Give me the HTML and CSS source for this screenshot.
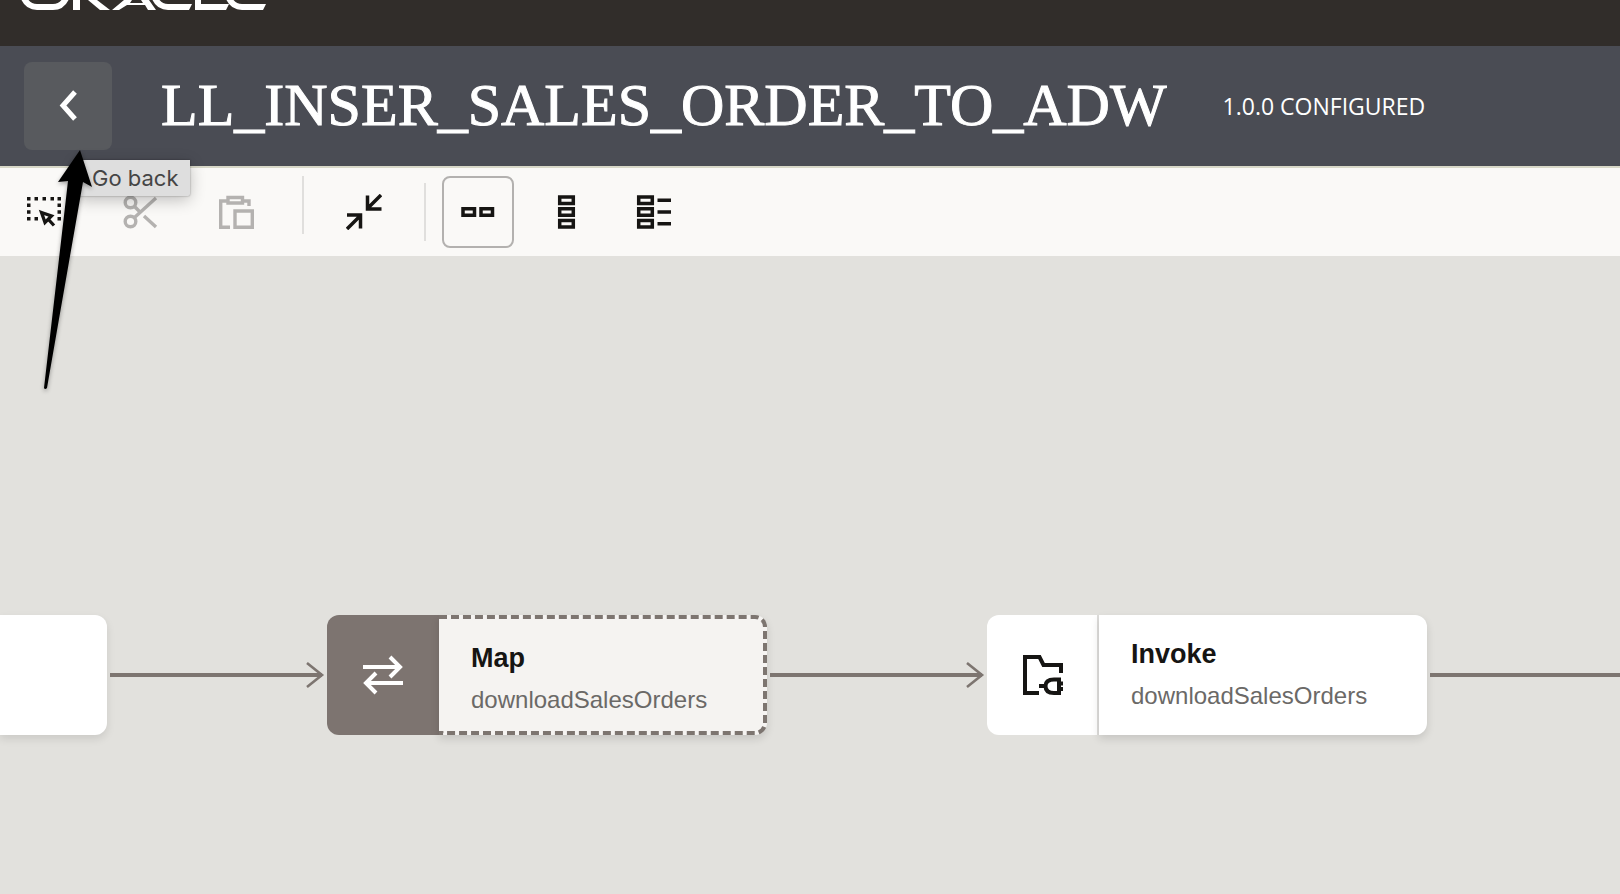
FILE: index.html
```html
<!DOCTYPE html>
<html lang="en">
<head>
<meta charset="utf-8">
<title>LL_INSER_SALES_ORDER_TO_ADW</title>
<meta name="viewport" content="width=device-width, initial-scale=1">
<link rel="stylesheet" href="styles.css">
</head>
<body>
<header class="brand">
  <svg class="brand-logo" width="300" height="12" viewBox="0 0 300 12" role="img" aria-label="Oracle">
    <g fill="none" stroke="#fff" stroke-width="6">
      <path d="M23-4Q27 7 37 7H53Q63 7 67-4"/>
      <path d="M154-4Q158 7 168 7H188"/>
      <path d="M198-4V7H225"/>
      <path d="M228-4Q232 7 242 7H262"/>
    </g>
    <g fill="#fff">
      <path d="M73 0h7v10h-7z"/>
      <path d="M88 0H97L110 10H100z"/>
      <path d="M124 0H132L130 3H143L141 0H149L156 10H148L145 5H127L119 10H112z"/>
      <path d="M188 4H192L189 10H188zM225 4H229L226 10H225zM262 4H266L263 10H262z"/>
    </g>
  </svg>
</header>
<div class="titlebar">
  <div class="back">
    <button class="back-button" type="button" aria-label="Go back" aria-describedby="back-tip">
      <svg width="20" height="32" viewBox="0 0 20 32" fill="none" stroke="#fff" stroke-width="5"><path d="M17 2L5 15.500L17 29"/></svg>
    </button>
    <span class="tooltip" id="back-tip" role="tooltip">Go back</span>
    <svg class="pointer" width="60" height="260" viewBox="0 0 60 260" aria-hidden="true"><path d="M38 10L50 47L41 42Q22 150 5 248Q3 250 2 248Q14 145 26 41L16 42z"/></svg>
  </div>
  <h1 class="title">LL_INSER_SALES_ORDER_TO_ADW</h1>
  <span class="version">1.0.0 CONFIGURED</span>
</div>
<div class="toolbar" role="toolbar" aria-label="Canvas tools">
  <button class="tool" type="button" aria-label="Select">
    <svg width="36" height="36" viewBox="0 0 36 36"><g fill="none" stroke="#161513" stroke-width="3.400"><path d="M1 4.700H4.500M8.500 4.700H12M16.500 4.700H20M24.500 4.700H28M31.500 4.700H35M1 11.300H4.500M1 18H4.500M1 24.700H4.500M8.500 24.700H12M31.500 11.300H35M31.500 18H35M31.500 24.700H35"/><path d="M15.500 18.500L25.500 22L19 28.500zM22 25L28 31.500" stroke-width="3.300"/></g></svg>
  </button>
  <button class="tool" type="button" aria-label="Cut" disabled>
    <svg width="36" height="36" viewBox="0 0 36 36" fill="none" stroke="#b4b2b0" stroke-width="3.400"><circle cx="8.500" cy="8.500" r="5.300"/><circle cx="8.500" cy="27.500" r="5.300"/><path d="M12.500 23.500L34 4M12.500 12.500L18 18M22 22L34 33"/></svg>
  </button>
  <button class="tool" type="button" aria-label="Paste" disabled>
    <svg width="36" height="36" viewBox="0 0 36 36" fill="none" stroke="#b4b2b0" stroke-width="3.400"><path d="M12 33.300H2.700V7H9M25 7H31V12M10 3.500H24.500V9H10zM17 17H34.300V33.300H17z"/></svg>
  </button>
  <span class="divider divider-high"></span>
  <button class="tool tool-collapse" type="button" aria-label="Collapse all">
    <svg width="36" height="36" viewBox="0 0 36 36" fill="none" stroke="#161513" stroke-width="3.500"><path d="M35 1L21.500 14.500M21.500 1.500V15H35.500M1 35L14.500 21.500M1 21H14.500V34.500"/></svg>
  </button>
  <span class="divider"></span>
  <button class="tool tool-active" type="button" aria-label="Horizontal layout" aria-pressed="true">
    <svg width="36" height="36" viewBox="0 0 36 36" fill="none" stroke="#161513" stroke-width="3.500"><path d="M3 14.700H14.500V21.300H3zM21 14.700H32.500V21.300H21z"/></svg>
  </button>
  <button class="tool" type="button" aria-label="Vertical layout">
    <svg width="36" height="36" viewBox="0 0 36 36" fill="none" stroke="#161513" stroke-width="3.500"><path d="M11.700 3H25.300V9.500H11.700zM11.700 14.800H25.300V21.300H11.700zM11.700 26.600H25.300V33H11.700z"/></svg>
  </button>
  <button class="tool" type="button" aria-label="Outline view">
    <svg width="36" height="36" viewBox="0 0 36 36" fill="none" stroke="#161513" stroke-width="3.500"><path d="M2.700 3H16.300V9.500H2.700zM2.700 14.800H16.300V21.300H2.700zM2.700 26.600H16.300V33H2.700zM21.500 6.200H35M21.500 18H35M21.500 29.800H35"/></svg>
  </button>
</div>
<main class="canvas">
  <div class="flow">
    <div class="node-tail"></div>
    <svg class="link" width="220" height="30" viewBox="0 0 220 30" fill="none" stroke="#7d7570"><path d="M3 15H215" stroke-width="4"/><path d="M200 3L215 15L200 27" stroke-width="2.600"/></svg>
    <article class="node node-map">
      <div class="node-icon"><svg width="42" height="42" viewBox="0 0 42 42" fill="none" stroke="#fff" stroke-width="4"><path d="M1 13H38M28 3L38 13L28 23M41 29H4M14 19L4 29L14 39"/></svg></div>
      <div class="node-body"><h2 class="node-name">Map</h2><p class="node-detail">downloadSalesOrders</p></div>
    </article>
    <svg class="link" width="220" height="30" viewBox="0 0 220 30" fill="none" stroke="#7d7570"><path d="M3 15H215" stroke-width="4"/><path d="M200 3L215 15L200 27" stroke-width="2.600"/></svg>
    <article class="node node-invoke">
      <div class="node-icon"><svg width="42" height="42" viewBox="0 0 42 42" fill="none" stroke="#161513" stroke-width="4"><path d="M18 39H4V3H18.500L22.500 11H40V19M18 32H24M38 25.500H33Q24.500 25.500 24.500 32Q24.500 39 33 39H38zM38 29.500H42M38 35H42"/></svg></div>
      <div class="node-body"><h2 class="node-name">Invoke</h2><p class="node-detail">downloadSalesOrders</p></div>
    </article>
    <div class="link-tail"></div>
  </div>
</main>
</body>
</html>
```
FILE: styles.css
```css
* { box-sizing: border-box; }
body {
  margin: 0;
  min-height: 100vh;
  display: flex;
  flex-direction: column;
  overflow-x: hidden;
  background: #e2e1dd;
  color: #161513;
  font-family: "Liberation Sans", Arial, sans-serif;
}
button { margin: 0; padding: 0; border: 0; background: none; }
svg { display: block; flex: none; }
.brand { height: 46px; background: #312d2a; }
.titlebar {
  display: flex;
  align-items: center;
  height: 122px;
  padding: 0 24px;
  background: #4a4c54;
  border-bottom: 2px solid #d8d8c8;
  color: #fff;
  white-space: nowrap;
}
.back { position: relative; flex: none; }
.back-button {
  display: grid;
  place-items: center;
  width: 88px;
  height: 88px;
  border-radius: 8px;
  background: #585a5e;
}
.tooltip {
  position: absolute;
  z-index: 2;
  left: 52px;
  top: 98px;
  height: 36px;
  padding: 0 12px 0 16px;
  border-radius: 0 0 2px 0;
  background: #dedede;
  box-shadow: 0 4px 16px rgba(0, 0, 0, 0.24), 0 0 2px rgba(0, 0, 0, 0.4);
  color: #454545;
  font: 22px/36px Inter, sans-serif;
}
.pointer {
  position: absolute;
  z-index: 3;
  left: 18px;
  top: 78px;
  pointer-events: none;
  filter: drop-shadow(0 2px 2px rgba(0, 0, 0, 0.35));
}
.title {
  margin: 0 0 0 49px;
  padding-bottom: 2px;
  font: 400 60px/72px "Liberation Serif", Georgia, serif;
  -webkit-text-stroke: 1px #fff;
}
.version {
  margin-left: 56px;
  padding-bottom: 1px;
  font: 500 23px/32px "Open Sans", sans-serif;
}
.toolbar {
  display: flex;
  align-items: center;
  height: 88px;
  padding-left: 8px;
  background: #faf9f7;
}
.tool {
  display: grid;
  place-items: center;
  flex: none;
  width: 72px;
  height: 72px;
  margin-right: 16px;
  border-radius: 8px;
}
.tool:nth-child(1), .tool:nth-child(2) { margin-right: 24px; }
.tool:nth-child(3) { margin-right: 30px; }
.tool-collapse { margin-right: 24px; }
.tool-active { border: 2px solid #b3b1af; }
.divider { flex: none; width: 2px; height: 58px; margin-right: 16px; background: #e0dfdd; }
.divider-high { margin-right: 24px; align-self: flex-start; margin-top: 8px; }
.canvas { flex: 1; padding-top: 359px; overflow: hidden; }
.flow { display: flex; align-items: center; }
.node-tail {
  flex: none;
  width: 107px;
  height: 120px;
  border-radius: 0 12px 12px 0;
  background: #fff;
  box-shadow: 0 4px 8px rgba(0, 0, 0, 0.1);
}
.node { display: flex; flex: none; width: 440px; height: 120px; }
.node-icon {
  display: grid;
  place-items: center;
  width: 112px;
  border-radius: 12px 0 0 12px;
}
.node-body {
  flex: 1;
  display: flex;
  flex-direction: column;
  justify-content: center;
  padding-left: 32px;
  border-radius: 0 12px 12px 0;
  background: #fff;
  box-shadow: 0 4px 8px rgba(0, 0, 0, 0.12);
}
.node-map .node-icon { background: #7d7470; }
.node-map .node-body {
  padding-top: 8px;
  border: 4px dashed #7d7570;
  border-left: 0;
  background: #f5f3f1;
}
.node-invoke .node-icon { border-right: 2px solid #dedddb; background: #fff; }
.node-name { margin: 0; font-size: 27px; line-height: 40px; }
.node-detail { margin: 2px 0 0; color: #6b6967; font-size: 24px; line-height: 40px; }
.link-tail { flex: 1; height: 4px; margin-left: 3px; background: #7d7570; }
```
